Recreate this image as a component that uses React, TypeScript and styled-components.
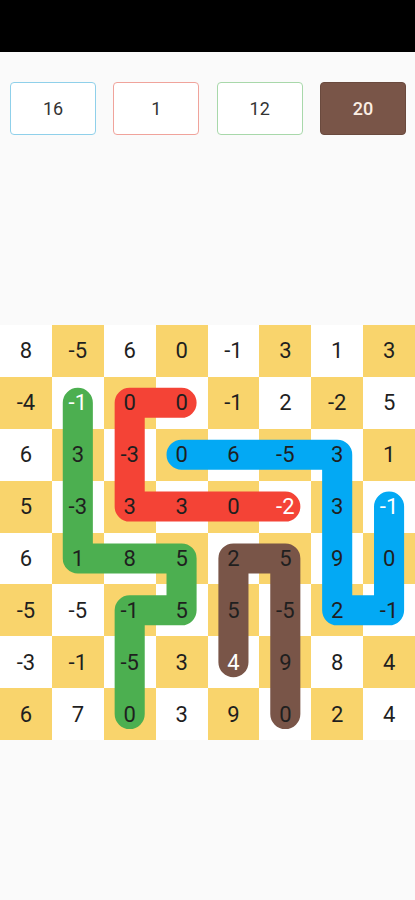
import React from 'react';
import styled, { createGlobalStyle } from 'styled-components';

const GlobalStyle = createGlobalStyle`
  html, body {
    margin: 0;
    padding: 0;
    background: #fafafa;
    font-family: Roboto, "Liberation Sans", sans-serif;
  }
`;

type Cell = [number, number];

const board: number[][] = [
  [8, -5, 6, 0, -1, 3, 1, 3],
  [-4, -1, 0, 0, -1, 2, -2, 5],
  [6, 3, -3, 0, 6, -5, 3, 1],
  [5, -3, 3, 3, 0, -2, 3, -1],
  [6, 1, 8, 5, 2, 5, 9, 0],
  [-5, -5, -1, 5, 5, -5, 2, -1],
  [-3, -1, -5, 3, 4, 9, 8, 4],
  [6, 7, 0, 3, 9, 0, 2, 4],
];

// head: the cell whose number is drawn in white
const paths: { color: string; head: Cell; cells: Cell[] }[] = [
  {
    color: '#4caf50',
    head: [1, 1],
    cells: [[1, 1], [2, 1], [3, 1], [4, 1], [4, 2], [4, 3], [5, 3], [5, 2], [6, 2], [7, 2]],
  },
  {
    color: '#f44336',
    head: [3, 5],
    cells: [[1, 3], [1, 2], [2, 2], [3, 2], [3, 3], [3, 4], [3, 5]],
  },
  {
    color: '#03a9f4',
    head: [3, 7],
    cells: [[2, 3], [2, 4], [2, 5], [2, 6], [3, 6], [4, 6], [5, 6], [5, 7], [4, 7], [3, 7]],
  },
  {
    color: '#795548',
    head: [6, 4],
    cells: [[6, 4], [5, 4], [4, 4], [4, 5], [5, 5], [6, 5], [7, 5]],
  },
];

const isHead = (r: number, c: number) => paths.some(({ head }) => head[0] === r && head[1] === c);

const targets = [
  { value: 16, border: '#8fd0ea', fill: '#ffffff', text: '#333333' },
  { value: 1, border: '#f0a39b', fill: '#ffffff', text: '#333333' },
  { value: 12, border: '#a8d8aa', fill: '#ffffff', text: '#333333' },
  { value: 20, border: '#6a4a3e', fill: '#795548', text: '#fbeee4' },
];

const Screen = styled.div`
  display: flex;
  flex-direction: column;
  width: 415px;
  min-height: 900px;
  background: #fafafa;
`;

const StatusBar = styled.div`
  height: 52px;
  background: #000000;
`;

const TargetRow = styled.div`
  display: flex;
  justify-content: space-between;
  padding: 30px 9px 0 10px;
`;

const TargetBox = styled.div<{ $border: string; $fill: string; $text: string }>`
  width: 86px;
  height: 53px;
  box-sizing: border-box;
  display: flex;
  align-items: center;
  justify-content: center;
  border: 1.5px solid ${(p) => p.$border};
  border-radius: 4px;
  background: ${(p) => p.$fill};
  color: ${(p) => p.$text};
  font-size: 18px;
  font-weight: ${(p) => (p.$fill === '#ffffff' ? 400 : 500)};
`;

const Board = styled.div`
  position: relative;
  margin-top: 190px;
  width: 415px;
  height: 415px;
  display: grid;
  grid-template-columns: repeat(8, 1fr);
  grid-template-rows: repeat(8, 1fr);
`;

const Square = styled.div<{ $yellow: boolean }>`
  display: flex;
  align-items: center;
  justify-content: center;
  background: ${(p) => (p.$yellow ? '#f9d46c' : '#ffffff')};
`;

const Number = styled.span<{ $head: boolean }>`
  position: relative;
  z-index: 2;
  font-size: 22px;
  color: ${(p) => (p.$head ? '#ffffff' : '#1f1f1f')};
`;

const Trails = styled.svg`
  position: absolute;
  inset: 0;
  z-index: 1;
  width: 415px;
  height: 415px;
  pointer-events: none;
`;

export default function App() {
  return (
    <Screen>
      <GlobalStyle />
      <StatusBar />
      <TargetRow>
        {targets.map((t, i) => (
          <TargetBox key={i} $border={t.border} $fill={t.fill} $text={t.text}>
            {t.value}
          </TargetBox>
        ))}
      </TargetRow>
      <Board>
        {board.map((row, r) =>
          row.map((n, c) => (
            <Square key={`${r}-${c}`} $yellow={(r + c) % 2 === 1}>
              <Number $head={isHead(r, c)}>{n}</Number>
            </Square>
          )),
        )}
        <Trails viewBox="0 0 8 8" preserveAspectRatio="none">
          {paths.map((p, i) => (
            <polyline
              key={i}
              points={p.cells.map(([r, c]) => `${c + 0.5},${r + 0.5}`).join(' ')}
              fill="none"
              stroke={p.color}
              strokeWidth={0.58}
              strokeLinecap="round"
              strokeLinejoin="round"
            />
          ))}
        </Trails>
      </Board>
    </Screen>
  );
}
